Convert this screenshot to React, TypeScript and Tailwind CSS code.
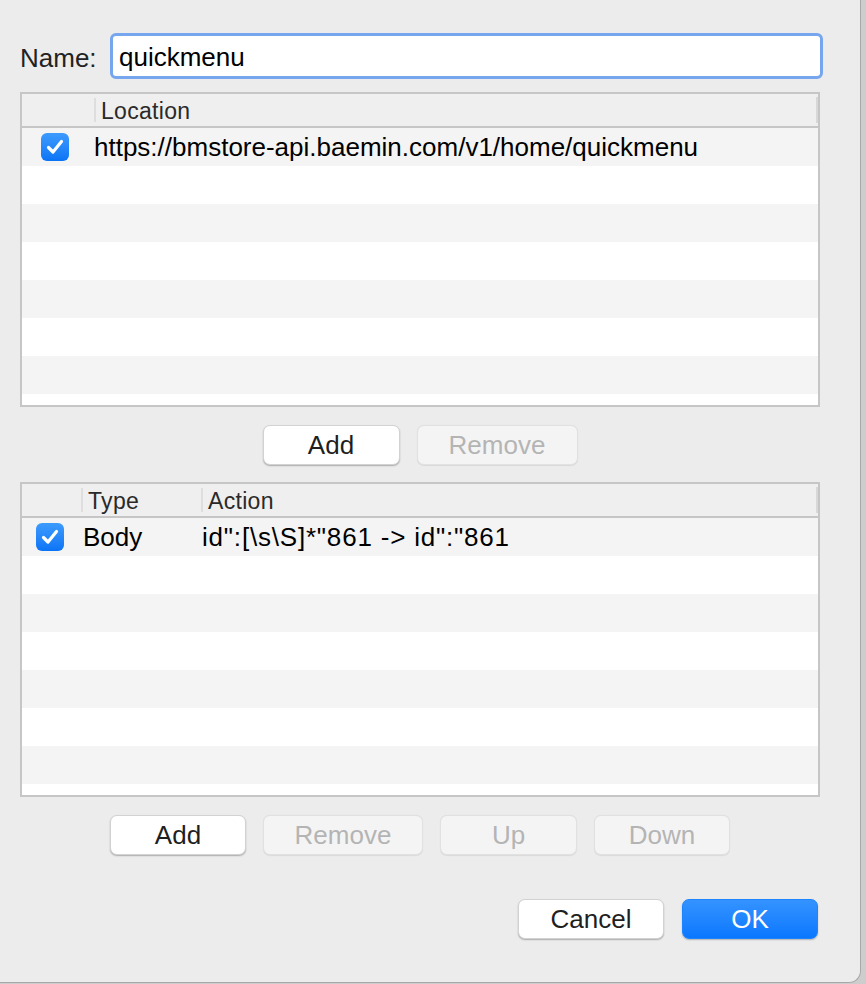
import React from 'react'

const font = { fontFamily: '"Liberation Sans", Arial, sans-serif' }

function Check({ className = '' }: { className?: string }) {
  return (
    <div className={`w-[28px] h-[28px] rounded-[6px] bg-gradient-to-b from-[#3d9bfd] to-[#0a74f5] flex items-center justify-center ${className}`}>
      <svg width="18" height="16" viewBox="0 0 18 16" fill="none">
        <path d="M2.5 8.5 L7 13 L15.5 2.5" stroke="white" strokeWidth="3.2" strokeLinecap="round" strokeLinejoin="round" />
      </svg>
    </div>
  )
}

function Btn({ label, w, disabled = false, primary = false }: { label: string; w: string; disabled?: boolean; primary?: boolean }) {
  let cls = 'bg-white text-[#1f1f1f] border-[#d2d2d2] shadow-[0_1px_1.5px_rgba(0,0,0,0.28)]'
  if (disabled) cls = 'bg-[#f4f4f4] text-[#b4b4b4] border-[#e1e1e1] shadow-[0_0.5px_1px_rgba(0,0,0,0.08)]'
  if (primary) cls = 'bg-gradient-to-b from-[#3393ff] to-[#0877ff] text-white border-[#1f84ff] shadow-[0_1px_1.5px_rgba(0,0,0,0.25)]'
  return (
    <div className={`${w} h-[40px] rounded-[7px] border flex items-center justify-center text-[26px] ${cls}`}>
      {label}
    </div>
  )
}

function Rows({ count, first }: { count: number; first: React.ReactNode }) {
  const rows = []
  for (let i = 0; i < count; i++) {
    rows.push(
      <div key={i} className={`h-[38px] shrink-0 flex items-center ${i % 2 === 0 ? 'bg-[#f4f4f4]' : 'bg-white'}`}>
        {i === 0 ? first : null}
      </div>
    )
  }
  return <div className="flex-1 flex flex-col overflow-hidden bg-white">{rows}</div>
}

export default function App() {
  return (
    <div className="w-[866px] h-[984px] bg-[#cdcdcd] flex" style={font}>
      <div className="w-[861px] h-[983px] bg-[#ececec] border-r border-b border-[#a8a8a8] rounded-br-[12px] pl-[20px] pr-[40px] pt-[33px] flex flex-col text-[#1e1e1e]">
        <div className="flex items-center h-[46px]">
          <div className="w-[90px] text-[26px] text-[#222] leading-[30px] pt-[3px]">Name:</div>
          <div className="flex-1 -mr-[3px] h-[46px] rounded-[6px] border-[3px] border-[#76a6ee] bg-white flex items-center pl-[6px] pt-[3px] text-[26px] text-black">
            quickmenu
          </div>
        </div>

        <div className="mt-[13px] h-[315px] border-2 border-[#c6c6c6] flex flex-col bg-white">
          <div className="h-[34px] shrink-0 bg-[#efefef] border-b-2 border-[#c6c6c6] flex items-center text-[23px] tracking-[0.3px] text-[#2a2a2a]">
            <div className="w-[72px] h-[24px]" />
            <div className="flex-1 h-[24px] border-l-2 border-[#dedede] pl-[5px] leading-[26px]">Location</div>
            <div className="w-[2px] h-[26px] bg-[#d8d8d8]" />
          </div>
          <Rows
            count={8}
            first={
              <>
                <Check className="ml-[19px]" />
                <span className="ml-[25px] text-[26px] text-black">https://bmstore-api.baemin.com/v1/home/quickmenu</span>
              </>
            }
          />
        </div>

        <div className="mt-[18px] flex justify-center gap-[17px]">
          <Btn label="Add" w="w-[137px]" />
          <Btn label="Remove" w="w-[161px]" disabled />
        </div>

        <div className="mt-[17px] h-[315px] border-2 border-[#c6c6c6] flex flex-col bg-white">
          <div className="h-[34px] shrink-0 bg-[#efefef] border-b-2 border-[#c6c6c6] flex items-center text-[23px] tracking-[0.3px] text-[#2a2a2a]">
            <div className="w-[59px] h-[24px]" />
            <div className="w-[120px] h-[24px] border-l-2 border-[#dedede] pl-[5px] leading-[26px]">Type</div>
            <div className="flex-1 h-[24px] border-l-2 border-[#dedede] pl-[5px] leading-[26px]">Action</div>
            <div className="w-[2px] h-[26px] bg-[#d8d8d8]" />
          </div>
          <Rows
            count={8}
            first={
              <>
                <Check className="ml-[14px]" />
                <span className="ml-[19px] w-[119px] text-[26px] text-black">Body</span>
                <span className="text-[26px] tracking-[0.8px] text-black">id":[\s\S]*"861 -&gt; id":"861</span>
              </>
            }
          />
        </div>

        <div className="mt-[18px] flex justify-center gap-[17px]">
          <Btn label="Add" w="w-[136px]" />
          <Btn label="Remove" w="w-[160px]" disabled />
          <Btn label="Up" w="w-[137px]" disabled />
          <Btn label="Down" w="w-[136px]" disabled />
        </div>

        <div className="mt-[44px] flex justify-end gap-[18px] pr-[2px]">
          <Btn label="Cancel" w="w-[146px]" />
          <Btn label="OK" w="w-[136px]" primary />
        </div>
      </div>
    </div>
  )
}
